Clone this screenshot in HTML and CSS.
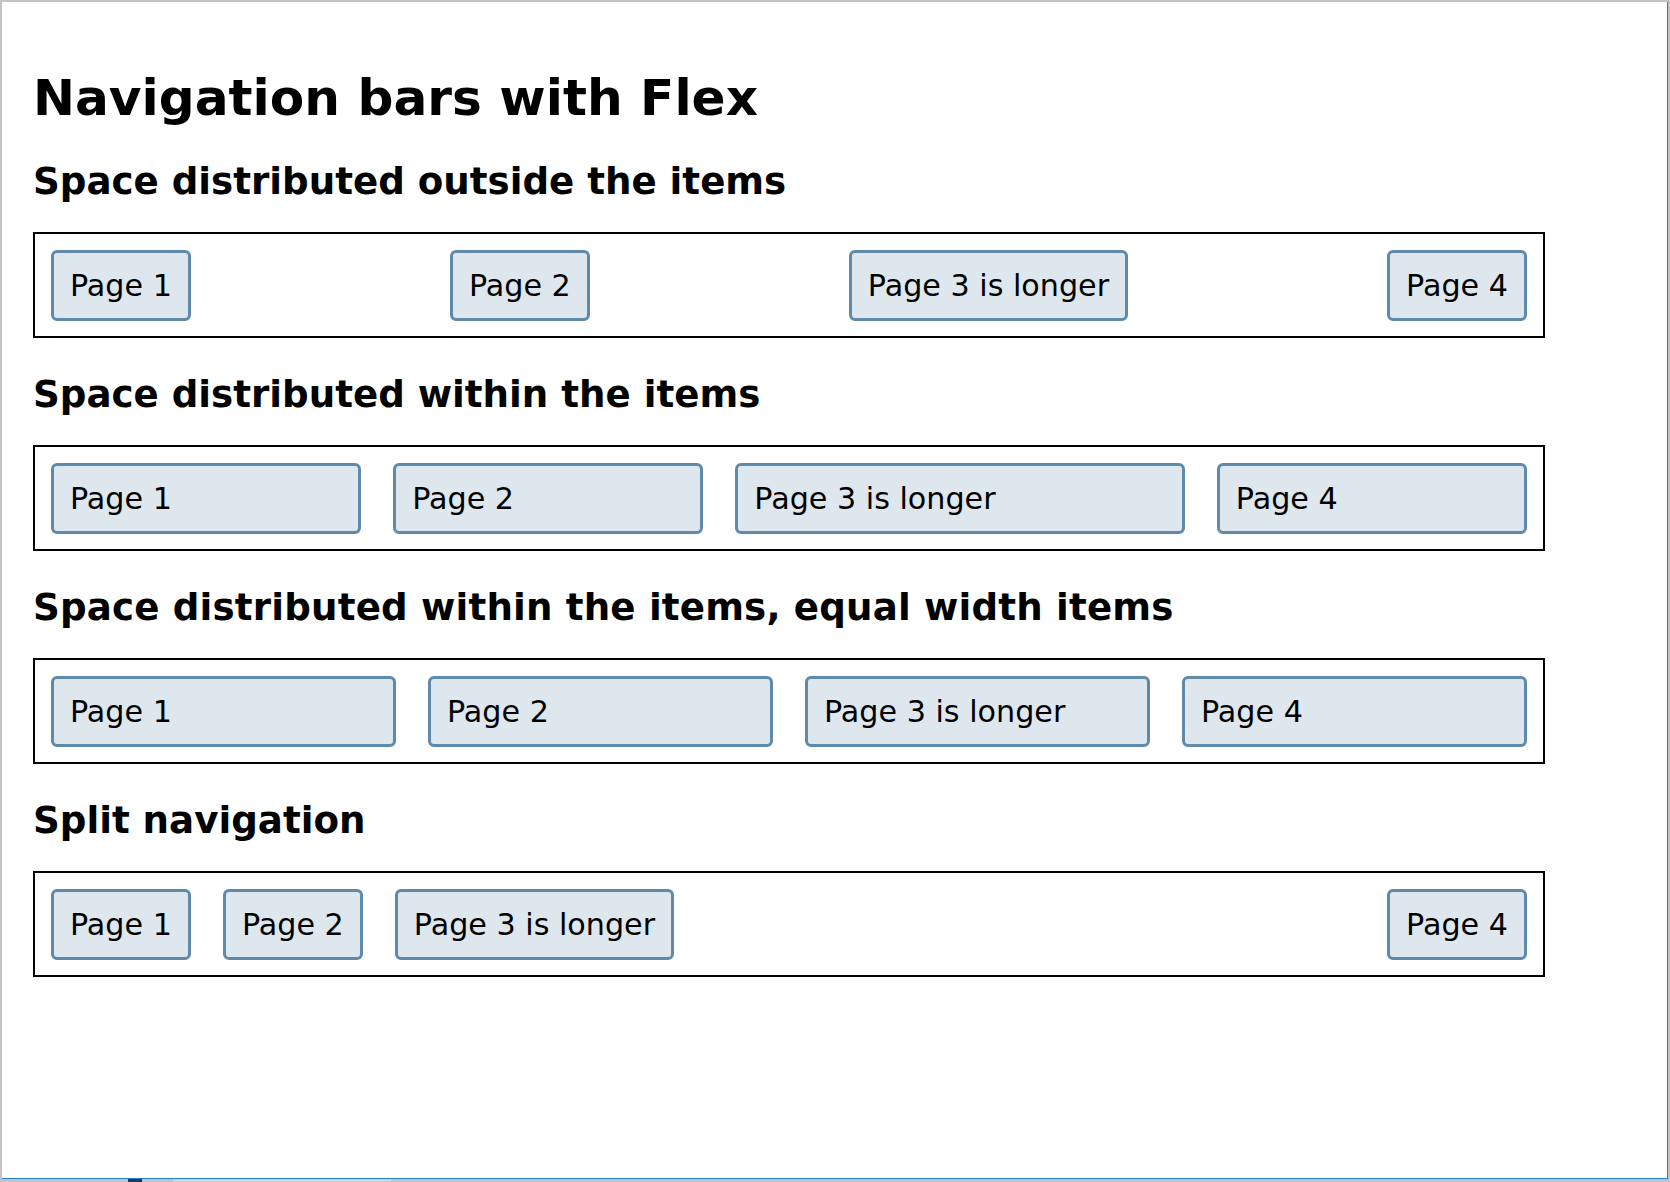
FILE: index.html
```html
<!DOCTYPE html>
<html lang="en">
<head>
<meta charset="utf-8">
<title>Navigation bars with Flex</title>
<link rel="stylesheet" href="styles.css">
</head>
<body>
<div class="screen">
  <div class="window">
    <main class="page">
      <h1 class="title">Navigation bars with Flex</h1>

      <h2 class="subtitle first">Space distributed outside the items</h2>
      <nav class="bar bar-between">
        <a class="item" href="#">Page 1</a>
        <a class="item" href="#">Page 2</a>
        <a class="item" href="#">Page 3 is longer</a>
        <a class="item" href="#">Page 4</a>
      </nav>

      <h2 class="subtitle">Space distributed within the items</h2>
      <nav class="bar bar-grow">
        <a class="item" href="#">Page 1</a>
        <a class="item" href="#">Page 2</a>
        <a class="item" href="#">Page 3 is longer</a>
        <a class="item" href="#">Page 4</a>
      </nav>

      <h2 class="subtitle subtitle-wide">Space distributed within the items, equal width items</h2>
      <nav class="bar bar-equal">
        <a class="item" href="#">Page 1</a>
        <a class="item" href="#">Page 2</a>
        <a class="item" href="#">Page 3 is longer</a>
        <a class="item" href="#">Page 4</a>
      </nav>

      <h2 class="subtitle">Split navigation</h2>
      <nav class="bar bar-split">
        <a class="item" href="#">Page 1</a>
        <a class="item" href="#">Page 2</a>
        <a class="item" href="#">Page 3 is longer</a>
        <a class="item item-push" href="#">Page 4</a>
      </nav>
    </main>
  </div>
  <div class="strip"><span class="strip-dark"></span><span class="strip-light"></span></div>
</div>
</body>
</html>
```
FILE: styles.css
```css
html, body {
  margin: 0;
  padding: 0;
  background: #c4c4c4;
}

.screen {
  box-sizing: border-box;
  height: 1182px;
  padding: 2px 2px 0 2px;
  display: flex;
  flex-direction: column;
  background: #c4c4c4;
}

.window {
  flex: 1 1 auto;
  background: #ffffff;
  border-right: 1px solid #1f80d6;
  border-bottom: 1px solid #1f80d6;
  overflow: hidden;
}

.strip {
  height: 3px;
  display: flex;
  flex: 0 0 auto;
}

.strip-dark {
  width: 14px;
  margin-left: 126px;
  background: #1a3a5e;
}

.strip-light {
  width: 218px;
  margin-left: 31px;
  background: #d2d2d2;
}

.page {
  padding: 66px 0 0 31px;
  font-family: "DejaVu Sans", Verdana, sans-serif;
  color: #000;
  font-size: 25px;
}

.title {
  margin: 0;
  font-size: 50.2px;
  font-weight: bold;
  line-height: normal;
}

.subtitle {
  margin: 34px 0 29px 0;
  font-size: 37.2px;
  font-weight: bold;
  line-height: normal;
}

.subtitle.first {
  margin-top: 32px;
}

.subtitle-wide {
  letter-spacing: 0.18px;
}

.bar {
  box-sizing: border-box;
  width: 1512px;
  border: 2px solid #000;
  padding: 15.5px 16px;
  display: flex;
  gap: 32px;
}

.item {
  display: block;
  padding: 15px 16px;
  font-size: 30.2px;
  line-height: normal;
  color: #000;
  text-decoration: none;
  background: #dfe7ee;
  border: 3px solid #5f8aaa;
  border-radius: 6px;
  white-space: nowrap;
}

.bar-between {
  justify-content: space-between;
  gap: 0;
}

.bar-grow .item {
  flex: 1 1 auto;
}

.bar-equal .item {
  flex: 1 1 0;
}

.bar-split .item-push {
  margin-left: auto;
}
```
